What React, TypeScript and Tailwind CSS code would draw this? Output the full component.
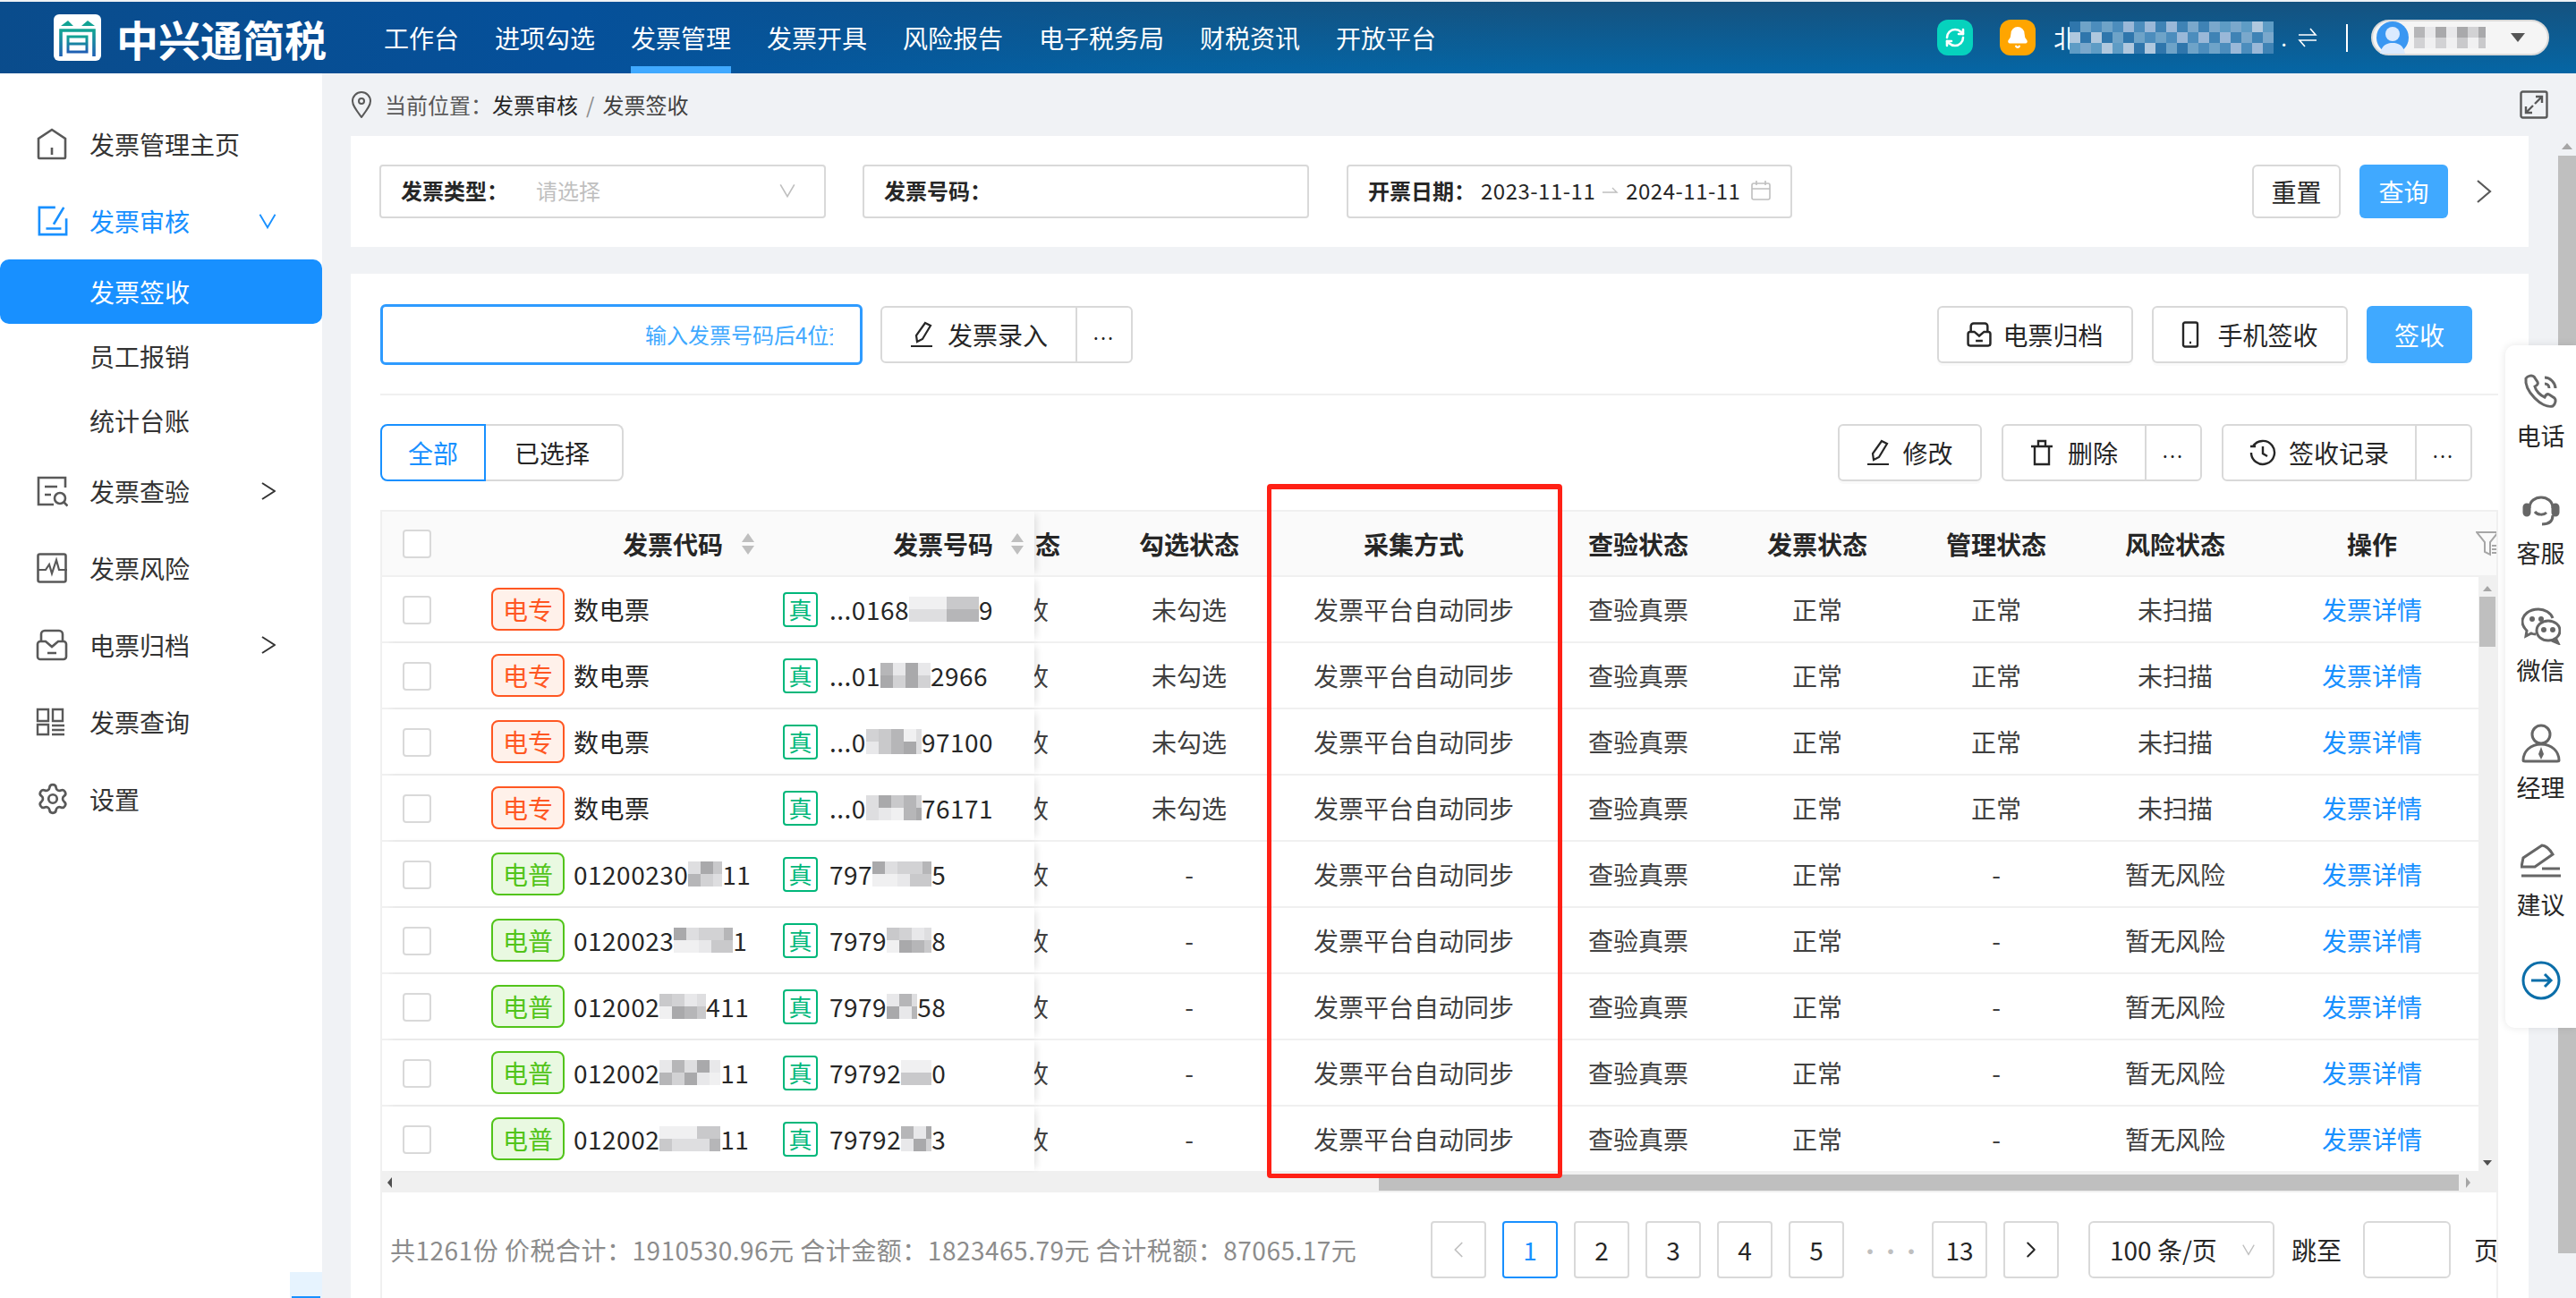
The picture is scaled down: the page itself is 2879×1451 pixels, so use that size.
import React from "react";
import { RefreshCw, Bell, Settings, ChevronLeft, ChevronRight } from "lucide-react";

const GRAY = ["#c9c9cb", "#dedee0", "#b6b6b8", "#e8e8ea", "#a9a9ab", "#d2d2d4", "#f0f0f1"];
const BLUE = ["#5e9cc5", "#7aa8cc", "#3f83b5", "#9ab8d8", "#4c8dbd", "#6ea3c8", "#2f76ac", "#b0c8de"];

function Mosaic({ w, h = 24, cell = 13, pal = GRAY, seed = 1 }: { w: number; h?: number; cell?: number; pal?: string[]; seed?: number }) {
  const cols = Math.ceil(w / cell);
  const rows = Math.ceil(h / cell);
  const cells = Array.from({ length: cols * rows }, (_, i) => pal[(i * 5 + seed * 3 + (i % 3) * seed) % pal.length]);
  return (
    <span
      className="inline-grid shrink-0 overflow-hidden"
      style={{ width: w, height: h, gridTemplateColumns: `repeat(${cols}, ${cell}px)`, gridAutoRows: `${cell}px` }}
    >
      {cells.map((c, i) => (
        <span key={i} style={{ background: c }} />
      ))}
    </span>
  );
}

const Logo = () => (
  <svg width="53" height="52" viewBox="0 0 53 52" className="shrink-0">
    <defs>
      <linearGradient id="lg" x1="0" y1="0" x2="0" y2="1">
        <stop offset="0" stopColor="#12a394" />
        <stop offset="1" stopColor="#1f5fb4" />
      </linearGradient>
    </defs>
    <rect width="53" height="52" rx="6" fill="#fff" />
    <path d="M8 13l8-6 6 6zM31 13l7-6 8 6z" fill="#12a394" />
    <path d="M8 47V18h37v29" fill="none" stroke="url(#lg)" strokeWidth="3.6" />
    <path d="M16 25h21v17H16zM16 33h21" fill="none" stroke="url(#lg)" strokeWidth="3" />
  </svg>
);

const VChevron = ({ className = "", color = "#bfbfbf", w = 18, h = 18 }: { className?: string; color?: string; w?: number; h?: number }) => (
  <svg width={w} height={h} viewBox="0 0 18 18" className={className} fill="none" stroke={color} strokeWidth="1.5">
    <path d="M2 3l7 12 7-12" />
  </svg>
);

const RightChev = () => (
  <svg width="16" height="22" viewBox="0 0 16 22" fill="none" stroke="#333" strokeWidth="2">
    <path d="M1 2l14 9-14 9" />
  </svg>
);

const ic = { fill: "none", stroke: "#595959", strokeWidth: 2.6 } as const;

const IconHome = () => (
  <svg width="34" height="36" viewBox="0 0 34 36" {...ic}>
    <path d="M2 33V12L17 2l15 10v21a1 1 0 0 1-1 1H3a1 1 0 0 1-1-1zM17 22v8" />
  </svg>
);
const IconEdit = () => (
  <svg width="34" height="34" viewBox="0 0 36 36" fill="none" stroke="#1890ff" strokeWidth="2.8">
    <path d="M21 2H2v32h32V15M31 2L19 22M10 27h18" />
  </svg>
);
const IconQuery = () => (
  <svg width="36" height="36" viewBox="0 0 36 36" {...ic}>
    <path d="M33 14V3H3v30h17M10 13h14M10 22h7" />
    <circle cx="27" cy="26" r="6" />
    <path d="M31.5 30.5l4 4" />
  </svg>
);
const IconRisk = () => (
  <svg width="36" height="36" viewBox="0 0 36 36" {...ic}>
    <rect x="2.5" y="2.5" width="31" height="31" rx="2" />
    <path d="M2 20h9l4-6 3 10 5-15 3 11h9" strokeWidth="2.2" />
  </svg>
);
const IconArchive = () => (
  <svg width="36" height="36" viewBox="0 0 36 36" {...ic}>
    <path d="M6 14V6a4 4 0 0 1 4-4h16a4 4 0 0 1 4 4v8" />
    <path d="M2 17a3 3 0 0 1 3-3h6l7 6 7-6h6a3 3 0 0 1 3 3v14a3 3 0 0 1-3 3H5a3 3 0 0 1-3-3zM13 27h10" />
  </svg>
);
const IconGrid = () => (
  <svg width="32" height="32" viewBox="0 0 32 32" {...ic} strokeWidth="2.4">
    <path d="M2 2h12v13H2zM19 2h11v13H19zM2 19h12v11H2zM18 20h14M18 25h14M18 30h14" />
  </svg>
);

const PenIcon = () => (
  <svg width="26" height="30" viewBox="0 0 26 30" fill="none" stroke="#262626" strokeWidth="2.2">
    <path d="M17 2l6 3-9 15-6 3-1-7zM1 28h24" />
  </svg>
);

const Dots = () => <span className="-mt-2 text-[22px] leading-none tracking-[2px] text-[#262626]">...</span>;

function SplitBtn({ children, w, icon, gap = 12 }: { children: string; w: number; icon: React.ReactNode; gap?: number }) {
  return (
    <div className="flex h-[64px] items-stretch rounded-[6px] border-2 border-[#d9d9d9] bg-white">
      <div className="flex items-center justify-center border-r-2 border-[#d9d9d9]" style={{ width: w, gap }}>
        {icon}
        <span className="text-[28px] leading-none text-[#262626]">{children}</span>
      </div>
      <div className="flex w-[60px] items-center justify-center">
        <Dots />
      </div>
    </div>
  );
}

function Btn({ children, w, icon, gap = 12 }: { children: string; w: number; icon?: React.ReactNode; gap?: number }) {
  return (
    <div
      className="flex h-[64px] items-center justify-center rounded-[6px] border-2 border-[#d9d9d9] bg-white shadow-[0_3px_0_rgba(0,0,0,0.02)]"
      style={{ width: w, gap }}
    >
      {icon}
      <span className="text-[28px] leading-none text-[#262626]">{children}</span>
    </div>
  );
}

const Check = ({ className = "" }: { className?: string }) => (
  <span className={`block h-[32px] w-[32px] shrink-0 rounded-[4px] border-2 border-[#d9d9d9] bg-white ${className}`} />
);

const Sort = ({ className = "" }: { className?: string }) => (
  <svg width="14" height="26" viewBox="0 0 14 26" fill="#bfbfbf" className={className}>
    <path d="M7 1l7 10H0zM7 25L0 15h14z" />
  </svg>
);

type Row = { kind: "z" | "p"; c: [string, number, string]; n: [string, number, string]; gx: string; mg: string; risk: string };
const rows: Row[] = [
  { kind: "z", c: ["数电票", 0, ""], n: ["...0168", 78, "9"], gx: "未勾选", mg: "正常", risk: "未扫描" },
  { kind: "z", c: ["数电票", 0, ""], n: ["...01", 56, "2966"], gx: "未勾选", mg: "正常", risk: "未扫描" },
  { kind: "z", c: ["数电票", 0, ""], n: ["...0", 62, "97100"], gx: "未勾选", mg: "正常", risk: "未扫描" },
  { kind: "z", c: ["数电票", 0, ""], n: ["...0", 62, "76171"], gx: "未勾选", mg: "正常", risk: "未扫描" },
  { kind: "p", c: ["01200230", 38, "11"], n: ["797", 66, "5"], gx: "-", mg: "-", risk: "暂无风险" },
  { kind: "p", c: ["0120023", 66, "1"], n: ["7979", 50, "8"], gx: "-", mg: "-", risk: "暂无风险" },
  { kind: "p", c: ["012002", 52, "411"], n: ["7979", 34, "58"], gx: "-", mg: "-", risk: "暂无风险" },
  { kind: "p", c: ["012002", 68, "11"], n: ["79792", 34, "0"], gx: "-", mg: "-", risk: "暂无风险" },
  { kind: "p", c: ["012002", 68, "11"], n: ["79792", 34, "3"], gx: "-", mg: "-", risk: "暂无风险" },
];

const Cell = ({ w, children, blue }: { w: string; children: React.ReactNode; blue?: boolean }) => (
  <div className={`${w} shrink-0 text-center text-[28px] leading-none ${blue ? "text-[#1890ff]" : "text-[#404040]"}`}>{children}</div>
);
const HCell = ({ w, children }: { w: string; children: string }) => (
  <div className={`${w} shrink-0 text-center text-[28px] font-bold leading-none text-[#262626]`}>{children}</div>
);

const SideItem = ({ icon, label }: { icon: React.ReactNode; label: string }) => (
  <div className="flex h-[131px] flex-col items-center justify-center gap-[10px]">
    <div className="flex h-[50px] items-center justify-center">{icon}</div>
    <span className="text-[27px] leading-none text-[#262626]">{label}</span>
  </div>
);

const si = { fill: "none", stroke: "#666", strokeWidth: 3 } as const;

const Page = ({ children, active }: { children: React.ReactNode; active?: boolean }) => (
  <div
    className={`flex h-[64px] w-[62px] items-center justify-center rounded-[4px] border-2 bg-white text-[28px] leading-none ${
      active ? "border-[#1890ff] text-[#1890ff]" : "border-[#d9d9d9] text-[#262626]"
    }`}
  >
    {children}
  </div>
);

const nav = ["工作台", "进项勾选", "发票管理", "发票开具", "风险报告", "电子税务局", "财税资讯", "开放平台"];

export default function App() {
  return (
    <div className="relative flex h-screen w-full flex-col overflow-hidden bg-[#f0f2f5] pt-[2px] [font-family:'Noto_Sans_CJK_SC','Noto_Sans',sans-serif]">
      {/* header */}
      <header className="flex h-[80px] shrink-0 items-center bg-[linear-gradient(100deg,#0a4c8c_0%,#05509a_22%,rgba(5,90,155,0.3)_45%,rgba(5,100,165,0)_60%),linear-gradient(180deg,#15527f,#0566a5)] pl-[60px] pr-[30px]">
        <Logo />
        <span className="ml-[17px] text-[47px] font-bold leading-none text-white">中兴通简税</span>
        <nav className="ml-[44px] flex h-full">
          {nav.map((n, i) => (
            <div key={n} className={`mx-[20px] flex h-full items-center border-b-[8px] text-[28px] leading-none text-white ${i === 2 ? "border-[#40a9ff]" : "border-transparent"}`}>
              <span className="mt-[8px]">{n}</span>
            </div>
          ))}
        </nav>
        <div className="ml-auto flex items-center">
          <div className="flex h-[40px] w-[40px] items-center justify-center rounded-[12px] bg-[#06d2bd]">
            <RefreshCw size={24} color="#fff" strokeWidth={2.6} />
          </div>
          <div className="ml-[30px] flex h-[40px] w-[40px] items-center justify-center rounded-[12px] bg-[#ffa500]">
            <Bell size={26} color="#fff" fill="#fff" />
          </div>
          <span className="ml-[20px] w-[18px] overflow-hidden text-[28px] leading-none text-white">北</span>
          <Mosaic w={228} h={36} cell={12} pal={BLUE} seed={2} />
          <span className="ml-[8px] text-[24px] leading-none text-white">.</span>
          <svg width="22" height="22" viewBox="0 0 22 22" className="ml-[12px]" fill="none" stroke="#fff" strokeWidth="1.6">
            <path d="M1 8h19l-6-7M21 14H2l6 7" />
          </svg>
          <span className="ml-[32px] h-[31px] w-[2px] bg-white" />
          <div className="ml-[26px] flex h-[40px] w-[199px] items-center rounded-[20px] border-2 border-[#d9d9d9] bg-[#f5f5f5] pl-[4px]">
            <svg width="36" height="36" viewBox="0 0 36 36" className="shrink-0">
              <circle cx="18" cy="18" r="18" fill="#3a97f2" />
              <circle cx="18" cy="14" r="8" fill="#dbeafe" />
              <path d="M4 36c2-10 8-12 14-12s12 2 14 12z" fill="#dbeafe" />
            </svg>
            <span className="ml-[6px] flex">
              <Mosaic w={80} h={24} cell={12} seed={3} />
            </span>
            <span className="ml-[28px] h-0 w-0 border-x-[8px] border-t-[10px] border-x-transparent border-t-[#555]" />
          </div>
        </div>
      </header>

      <div className="flex min-h-0 flex-1">
        {/* sidebar */}
        <aside className="relative flex w-[360px] shrink-0 flex-col bg-white pt-[36px] text-[28px] leading-none text-[#333]">
          <div className="flex h-[86px] items-center">
            <span className="flex w-[100px] pl-[41px]"><IconHome /></span>
            <span>发票管理主页</span>
          </div>
          <div className="flex h-[86px] items-center text-[#1890ff]">
            <span className="flex w-[100px] pl-[42px]"><IconEdit /></span>
            <span className="flex-1">发票审核</span>
            <VChevron className="mr-[49px]" color="#1890ff" w={24} h={22} />
          </div>
          <div className="flex h-[72px] items-center rounded-[10px] bg-[#1890ff] pl-[100px] text-white">发票签收</div>
          <div className="flex h-[72px] items-center pl-[100px]">员工报销</div>
          <div className="flex h-[72px] items-center pl-[100px]">统计台账</div>
          {[
            { l: "发票查验", i: <IconQuery />, c: true },
            { l: "发票风险", i: <IconRisk /> },
            { l: "电票归档", i: <IconArchive />, c: true },
            { l: "发票查询", i: <IconGrid /> },
            { l: "设置", i: <Settings size={38} color="#595959" strokeWidth={1.7} /> },
          ].map((m) => (
            <div key={m.l} className="flex h-[86px] items-center">
              <span className="flex w-[100px] pl-[40px]">{m.i}</span>
              <span className="flex-1">{m.l}</span>
              {m.c && <span className="mr-[52px]"><RightChev /></span>}
            </div>
          ))}
          <div className="absolute bottom-0 right-0 flex h-[29px] w-[36px] items-end justify-center bg-[#e6f3fe]">
            <span className="h-[2px] w-[32px] bg-[#1890ff]" />
          </div>
        </aside>

        {/* main */}
        <main className="flex min-w-0 flex-1 flex-col pl-[32px] pr-[33px]">
          {/* breadcrumb */}
          <div className="flex h-[70px] shrink-0 items-center text-[24px] leading-none">
            <svg width="24" height="30" viewBox="0 0 24 30" fill="none" stroke="#595959" strokeWidth="2">
              <path d="M12 29C6 21 2 16 2 11a10 10 0 0 1 20 0c0 5-4 10-10 18z" />
              <circle cx="12" cy="11" r="3" />
            </svg>
            <span className="ml-[14px] text-[#595959]">当前位置：</span>
            <span className="text-[#262626]">发票审核</span>
            <span className="mx-[9px] text-[#8c8c8c]">/</span>
            <span className="text-[#404040]">发票签收</span>
            <svg width="32" height="32" viewBox="0 0 32 32" className="-mr-[22px] ml-auto" fill="none" stroke="#595959" strokeWidth="2.4">
              <rect x="1.5" y="1.5" width="29" height="29" rx="2" />
              <path d="M18 7h7v7M25 7L17 15M7 18v7h7M7 25l8-8" />
            </svg>
          </div>

          {/* filter */}
          <section className="flex h-[124px] shrink-0 items-center bg-white pl-[32px] pr-[41px] text-[24px] leading-none">
            <div className="flex h-[60px] w-[499px] items-center rounded-[4px] border-2 border-[#d9d9d9] pb-[2px] pl-[22px] pr-[30px]">
              <span className="w-[151px] font-bold text-[#262626]">发票类型：</span>
              <span className="flex-1 text-[#bfbfbf]">请选择</span>
              <VChevron w={22} h={20} />
            </div>
            <div className="ml-[41px] flex h-[60px] w-[499px] items-center rounded-[4px] border-2 border-[#d9d9d9] pb-[2px] pl-[22px]">
              <span className="font-bold text-[#262626]">发票号码：</span>
            </div>
            <div className="ml-[42px] flex h-[60px] w-[498px] items-center rounded-[4px] border-2 border-[#d9d9d9] pb-[2px] pl-[22px]">
              <span className="w-[126px] font-bold text-[#262626]">开票日期：</span>
              <span className="tracking-[0.5px] text-[#262626]">2023-11-11</span>
              <svg width="18" height="12" viewBox="0 0 18 12" className="mx-[8px]" fill="none" stroke="#bfbfbf" strokeWidth="1.4">
                <path d="M0 8h16l-5-5" />
              </svg>
              <span className="tracking-[0.5px] text-[#262626]">2024-11-11</span>
              <svg width="22" height="22" viewBox="0 0 22 22" className="ml-[12px]" fill="none" stroke="#bfbfbf" strokeWidth="1.6">
                <rect x="1" y="3" width="20" height="18" rx="2" />
                <path d="M1 9h20M6 0v5M16 0v5" />
              </svg>
            </div>
            <div className="ml-auto flex h-[60px] w-[99px] items-center justify-center rounded-[6px] border-2 border-[#d9d9d9] text-[28px] text-[#262626]">重置</div>
            <div className="ml-[21px] flex h-[60px] w-[99px] items-center justify-center rounded-[6px] bg-[#40a9ff] text-[28px] text-white">查询</div>
            <svg width="18" height="28" viewBox="0 0 18 28" className="ml-[31px]" fill="none" stroke="#595959" strokeWidth="2.2">
              <path d="M2 2l14 12L2 26" />
            </svg>
          </section>

          {/* list card */}
          <section className="relative mt-[30px] flex min-h-0 flex-1 flex-col bg-white pl-[33px] pr-[34px] pt-[34px]">
            <div className="flex h-[68px] shrink-0 items-center pr-[29px]">
              <div className="flex h-[68px] w-[539px] items-center justify-end overflow-hidden rounded-[6px] border-[3px] border-[#2e9bff] pr-[30px] text-[24px] leading-none text-[#40a9ff]">
                <span className="w-[210px] overflow-hidden whitespace-nowrap">输入发票号码后4位查</span>
              </div>
              <div className="ml-[20px]">
                <SplitBtn w={218} icon={<PenIcon />} gap={16}>发票录入</SplitBtn>
              </div>
              <div className="ml-auto flex items-center gap-[21px]">
                <Btn w={219} icon={<IconArchiveSmall />}>电票归档</Btn>
                <Btn w={219} icon={<PhoneSmall />} gap={20}>手机签收</Btn>
                <div className="flex h-[64px] w-[118px] items-center justify-center rounded-[6px] bg-[#40a9ff] text-[28px] leading-none text-white">签收</div>
              </div>
            </div>
            <div className="mt-[32px] h-[2px] shrink-0 bg-[#f0f0f0]" />
            <div className="mt-[32px] flex h-[64px] shrink-0 items-center pr-[29px]">
              <div className="flex h-[64px] w-[118px] items-center justify-center rounded-l-[8px] border-2 border-[#1890ff] text-[28px] leading-none text-[#1890ff]">全部</div>
              <div className="flex h-[64px] w-[154px] items-center justify-center rounded-r-[8px] border-2 border-l-0 border-[#d9d9d9] pr-[4px] text-[28px] leading-none text-[#262626]">已选择</div>
              <div className="ml-auto flex items-center gap-[22px]">
                <Btn w={161} icon={<PenIcon />} gap={14}>修改</Btn>
                <SplitBtn w={160} icon={<TrashIcon />} gap={16}>删除</SplitBtn>
                <SplitBtn w={216} icon={<ClockIcon />} gap={14}>签收记录</SplitBtn>
              </div>
            </div>

            {/* table */}
            <div className="relative mt-[32px] shrink-0 border-x-2 border-[#f0f0f0]">
              <div className="flex h-[75px] items-center overflow-hidden border-y-2 border-[#f0f0f0] bg-[#fafafa]">
                <div className="relative z-10 flex h-full w-[729px] shrink-0 items-center bg-[#fafafa] pl-[23px] shadow-[6px_0_8px_-4px_rgba(0,0,0,0.12)]">
                  <Check />
                  <span className="ml-[214px] text-[28px] font-bold leading-none text-[#262626]">发票代码</span>
                  <Sort className="ml-[21px]" />
                  <span className="ml-[155px] text-[28px] font-bold leading-none text-[#262626]">发票号码</span>
                  <Sort className="ml-[20px]" />
                </div>
                <div className="flex items-center">
                  <div className="flex w-[73px] shrink-0 justify-end overflow-hidden pr-[44px] text-[28px] font-bold leading-none text-[#262626]">态</div>
                  <HCell w="w-[200px]">勾选状态</HCell>
                  <HCell w="w-[302px]">采集方式</HCell>
                  <HCell w="w-[200px]">查验状态</HCell>
                  <HCell w="w-[200px]">发票状态</HCell>
                  <HCell w="w-[200px]">管理状态</HCell>
                  <HCell w="w-[200px]">风险状态</HCell>
                  <HCell w="w-[240px]">操作</HCell>
                  <svg width="26" height="30" viewBox="0 0 26 30" className="-ml-[4px] shrink-0" fill="none" stroke="#a6a6a6" strokeWidth="2">
                    <path d="M1 2h24l-9 11v14l-6-3V13zM18 17h8M18 21h8M18 25h8" />
                  </svg>
                </div>
              </div>
              <div className="flex">
                <div className="min-w-0 flex-1 overflow-hidden">
                  {rows.map((r, i) => (
                    <div key={i} className="flex h-[74px] items-center border-b-2 border-[#f0f0f0]">
                      <div className="relative z-10 flex h-full w-[729px] shrink-0 items-center bg-white pl-[23px] shadow-[6px_0_8px_-4px_rgba(0,0,0,0.12)]">
                        <Check className="mt-[2px]" />
                        <span
                          className={`ml-[67px] flex h-[48px] w-[82px] shrink-0 items-center justify-center rounded-[8px] border-2 text-[28px] leading-none ${
                            r.kind === "z" ? "border-[#ff5722] bg-[#fff1ea] text-[#ff5722]" : "border-[#52c41a] bg-[#e9f9e1] text-[#52c41a]"
                          }`}
                        >
                          {r.kind === "z" ? "电专" : "电普"}
                        </span>
                        <span className="ml-[10px] flex w-[234px] shrink-0 items-center text-[28px] leading-none tracking-[0.5px] text-[#262626]">
                          {r.c[0]}
                          {r.c[1] > 0 && <Mosaic w={r.c[1]} h={28} cell={14} seed={i + 1} />}
                          {r.c[2]}
                        </span>
                        <span className="flex h-[39px] w-[39px] shrink-0 items-center justify-center rounded-[4px] border-2 border-[#00b77a] text-[26px] leading-none text-[#00b77a]">真</span>
                        <span className="ml-[13px] flex items-center text-[28px] leading-none tracking-[0.5px] text-[#262626]">
                          {r.n[0]}
                          <Mosaic w={r.n[1]} h={28} cell={14} seed={i + 2} />
                          {r.n[2]}
                        </span>
                      </div>
                      <div className="flex items-center">
                        <div className="flex w-[73px] shrink-0 justify-end overflow-hidden pr-[57px] text-[28px] leading-none text-[#404040]">
                          <span className="w-[16px] shrink-0 overflow-hidden whitespace-nowrap [direction:rtl]">收</span>
                        </div>
                        <Cell w="w-[200px]">{r.gx}</Cell>
                        <Cell w="w-[302px]">发票平台自动同步</Cell>
                        <Cell w="w-[200px]">查验真票</Cell>
                        <Cell w="w-[200px]">正常</Cell>
                        <Cell w="w-[200px]">{r.mg}</Cell>
                        <Cell w="w-[200px]">{r.risk}</Cell>
                        <Cell w="w-[240px]" blue>发票详情</Cell>
                      </div>
                    </div>
                  ))}
                </div>
                <div className="flex w-[20px] shrink-0 flex-col items-center bg-[#f0f0f0]">
                  <span className="mt-[10px] h-0 w-0 border-x-[5px] border-b-[6px] border-x-transparent border-b-[#a6a6a6]" />
                  <span className="mt-[6px] h-[56px] w-[18px] bg-[#bfbfbf]" />
                  <span className="mb-[8px] mt-auto h-0 w-0 border-x-[5px] border-t-[6px] border-x-transparent border-t-[#505050]" />
                </div>
              </div>
              <div className="flex h-[22px] items-center bg-[#f0f0f0]">
                <ChevTri dir="l" />
                <span className="ml-[1103px] h-[18px] w-[1207px] bg-[#bfbfbf]" />
                <ChevTri dir="r" />
              </div>
              {/* highlight */}
              <div className="pointer-events-none absolute -top-[29px] left-[989px] z-20 h-[776px] w-[330px] rounded-[4px] border-[5px] border-t-[6px] border-[#ff2015]" />
            </div>

            {/* footer */}
            <div className="flex flex-1 border-x-2 border-[#f0f0f0] pt-[32px]">
              <div className="flex h-[64px] w-full items-center overflow-hidden">
                <span className="ml-[9px] w-[1163px] shrink-0 whitespace-nowrap text-[28px] leading-none tracking-[0.5px] text-[#8c8c8c]">
                  共1261份 价税合计：1910530.96元 合计金额：1823465.79元 合计税额：87065.17元
                </span>
                <div className="flex shrink-0 items-center gap-[18px]">
                  <Page><ChevronLeft size={30} color="#bfbfbf" strokeWidth={1.4} /></Page>
                  <Page active>1</Page>
                  <Page>2</Page>
                  <Page>3</Page>
                  <Page>4</Page>
                  <Page>5</Page>
                  <span className="w-[62px] text-center text-[22px] font-bold leading-none tracking-[1px] text-[#bfbfbf]">•••</span>
                  <Page>13</Page>
                  <Page><ChevronRight size={30} color="#262626" strokeWidth={1.6} /></Page>
                </div>
                <div className="ml-[33px] flex h-[64px] w-[208px] shrink-0 items-center justify-between rounded-[6px] border-2 border-[#d9d9d9] pl-[22px] pr-[18px] text-[28px] leading-none text-[#262626]">
                  100 条/页
                  <VChevron w={18} h={16} />
                </div>
                <span className="ml-[19px] shrink-0 text-[28px] leading-none text-[#262626]">跳至</span>
                <span className="ml-[24px] h-[64px] w-[98px] shrink-0 rounded-[6px] border-2 border-[#d9d9d9]" />
                <span className="ml-[26px] shrink-0 text-[28px] leading-none text-[#262626]">页</span>
              </div>
            </div>
          </section>
        </main>

        {/* page scrollbar */}
        <div className="flex w-[20px] shrink-0 flex-col items-center bg-[#f0f2f5] pt-[78px]">
          <span className="h-0 w-0 border-x-[6px] border-b-[7px] border-x-transparent border-b-[#a6a6a6]" />
          <span className="mt-[7px] h-[1227px] w-full bg-[#bfbfbf]" />
        </div>
      </div>

      {/* floating contact panel */}
      <div className="absolute right-0 top-[386px] z-30 flex w-[79px] flex-col items-center rounded-l-[10px] bg-white pt-[5px] shadow-[0_0_10px_rgba(0,0,0,0.1)]">
        <SideItem label="电话" icon={
          <svg width="42" height="42" viewBox="0 0 42 42" {...si}>
            <path d="M4 6c2-3 7-4 9-2l4 6c1 2-1 4-3 5 1 5 6 10 11 12 1-2 3-4 5-3l6 4c2 2 1 7-2 9-12 3-32-17-30-31zM25 5c6 0 12 6 12 12M25 12c3 0 5 2 5 5" />
          </svg>
        } />
        <SideItem label="客服" icon={
          <svg width="42" height="42" viewBox="0 0 42 42" {...si}>
            <path d="M8 20C8 4 34 4 34 20" />
            <rect x="2" y="16" width="6" height="12" rx="3" fill="#666" />
            <rect x="34" y="16" width="6" height="12" rx="3" fill="#666" />
            <path d="M34 28c0 8-6 10-12 10M14 24c3 4 10 4 13 1" />
          </svg>
        } />
        <SideItem label="微信" icon={
          <svg width="44" height="42" viewBox="0 0 44 42" {...si}>
            <path d="M16 30c-2 0-4-.5-5-1l-6 3 1-6C3 23 1 19 1 16 1 8 9 2 19 2c7 0 14 4 16 10" />
            <ellipse cx="30" cy="26" rx="13" ry="11" />
            <path d="M38 34l3 6-7-3" />
            <circle cx="25" cy="25" r="1.5" fill="#666" />
            <circle cx="35" cy="25" r="1.5" fill="#666" />
            <circle cx="12" cy="13" r="1.5" fill="#666" />
            <circle cx="22" cy="13" r="1.5" fill="#666" />
          </svg>
        } />
        <SideItem label="经理" icon={
          <svg width="44" height="44" viewBox="0 0 44 44" {...si}>
            <circle cx="22" cy="12" r="10" />
            <path d="M2 41c0-10 8-18 20-18s20 8 20 18c0 1-1 1-2 1H4c-1 0-2 0-2-1z" />
            <path d="M22 26l-3 8 3 6 3-6z" fill="#666" stroke="none" />
          </svg>
        } />
        <SideItem label="建议" icon={
          <svg width="46" height="38" viewBox="0 0 46 38" {...si}>
            <path d="M24 2L3 16l-2 10h15l20-14c-3-5-8-10-12-10zM24 28h20M1 36h44" />
          </svg>
        } />
        <div className="mb-[31px] mt-[28px] flex">
          <svg width="44" height="44" viewBox="0 0 44 44" fill="none" stroke="#0b6ea9" strokeWidth="3">
            <circle cx="22" cy="22" r="20" />
            <path d="M11 22h22M26 15l7 7-7 7" />
          </svg>
        </div>
      </div>
    </div>
  );
}

function IconArchiveSmall() {
  return (
    <svg width="28" height="30" viewBox="0 0 36 36" fill="none" stroke="#262626" strokeWidth="3.2">
      <path d="M6 14V6a4 4 0 0 1 4-4h16a4 4 0 0 1 4 4v8" />
      <path d="M2 17a3 3 0 0 1 3-3h6l7 6 7-6h6a3 3 0 0 1 3 3v14a3 3 0 0 1-3 3H5a3 3 0 0 1-3-3zM13 27h10" />
    </svg>
  );
}
function PhoneSmall() {
  return (
    <svg width="20" height="30" viewBox="0 0 20 30" fill="none" stroke="#262626" strokeWidth="2.4">
      <rect x="2" y="1.5" width="16" height="27" rx="2" />
      <path d="M9 24h2" />
    </svg>
  );
}
function TrashIcon() {
  return (
    <svg width="26" height="30" viewBox="0 0 26 30" fill="none" stroke="#262626" strokeWidth="2.4">
      <path d="M1 8h24M9 8V2h8v6M5 8v20h16V8" />
    </svg>
  );
}
function ClockIcon() {
  return (
    <svg width="30" height="30" viewBox="0 0 30 30" fill="none" stroke="#262626" strokeWidth="2.4">
      <path d="M4 8a13 13 0 1 1-2 7M15 8v8l5 3M1 8h6" />
    </svg>
  );
}
function ChevTri({ dir }: { dir: "l" | "r" }) {
  return dir === "l" ? (
    <span className="ml-[6px] h-0 w-0 shrink-0 border-y-[6px] border-r-[5px] border-y-transparent border-r-[#505050]" />
  ) : (
    <span className="ml-[8px] h-0 w-0 shrink-0 border-y-[6px] border-l-[5px] border-y-transparent border-l-[#a6a6a6]" />
  );
}
